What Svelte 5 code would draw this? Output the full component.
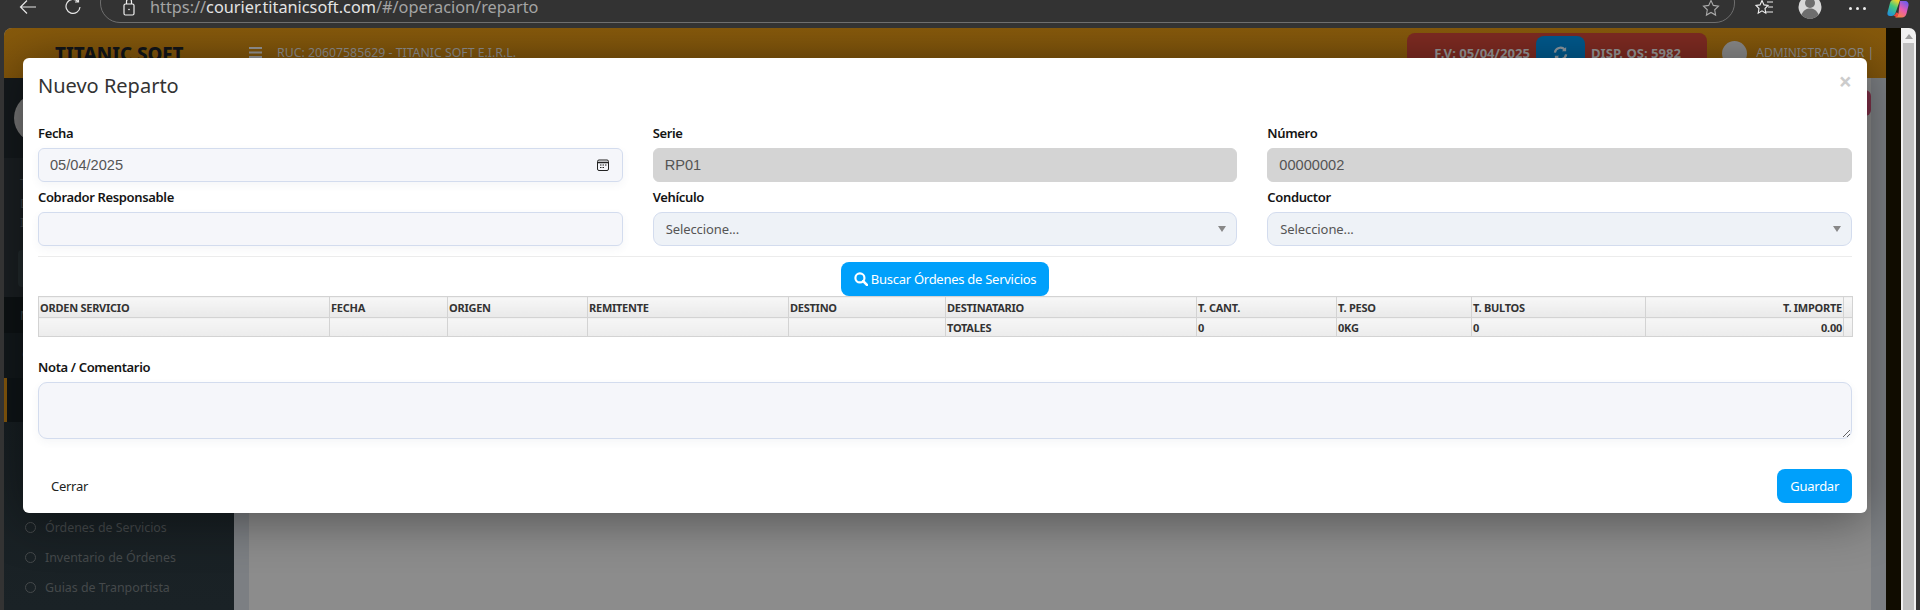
<script>
    const columns = [
        { label: "ORDEN SERVICIO", width: 291, total: "" },
        { label: "FECHA", width: 118, total: "" },
        { label: "ORIGEN", width: 140, total: "" },
        { label: "REMITENTE", width: 201, total: "" },
        { label: "DESTINO", width: 157, total: "" },
        { label: "DESTINATARIO", width: 251, total: "TOTALES" },
        { label: "T. CANT.", width: 140, total: "0" },
        { label: "T. PESO", width: 135, total: "0KG" },
        { label: "T. BULTOS", width: 174, total: "0" },
        { label: "T. IMPORTE", width: 198, total: "0.00", right: true },
        { label: "", width: 9, total: "" },
    ];

    const menu = ["Órdenes de Servicios", "Inventario de Órdenes", "Guias de Tranportista"];
</script>

<div class="browser">
    <header class="toolbar">
        <svg class="back" width="18" height="16" viewBox="0 0 18 16" fill="none" stroke="#e6e6e6" stroke-width="1.2">
            <path d="M17 8H1.5M8 1.5L1.5 8L8 14.5" />
        </svg>
        <svg class="reload" width="18" height="18" viewBox="0 0 18 18" fill="none" stroke="#e6e6e6" stroke-width="1.2">
            <path d="M14 3.5A7 7 0 1 0 16 9M14.5 0.5V4H11" />
        </svg>
        <div class="address">
            <svg class="lock" width="12" height="18" viewBox="0 0 12 18" fill="none" stroke="#f0f0f0" stroke-width="1.2">
                <rect x="1" y="6" width="10" height="11" rx="1.5" />
                <path d="M3.5 6V3.5a2.5 2.5 0 0 1 5 0V6" />
                <circle cx="6" cy="11.5" r="0.8" fill="#f0f0f0" stroke="none" />
            </svg>
            <span class="url"><span class="dim">https://</span>courier.titanicsoft.com<span class="dim">/#/operacion/reparto</span></span>
            <svg class="star" width="18" height="18" viewBox="0 0 18 18" fill="none" stroke="#aaa" stroke-width="1.1">
                <path d="M9 1.5l2.3 4.9 5.2.7-3.8 3.7.9 5.3L9 13.5l-4.6 2.6.9-5.3-3.8-3.7 5.2-.7z" />
            </svg>
        </div>
        <svg class="favs" width="20" height="18" viewBox="0 0 20 18" fill="none" stroke="#f0f0f0" stroke-width="1.1">
            <path d="M8 1.5l2 4.4 4 .6-3 3 .8 4.6L8 11.8l-3.8 2.3.8-4.6-3-3 4-.6zM13 3h6M14 8h5M12 13h7" />
        </svg>
        <div class="profile">
            <svg width="24" height="24" viewBox="0 0 24 24">
                <circle cx="12" cy="12" r="11.5" fill="#d8d8d8" />
                <circle cx="12" cy="8" r="5" fill="#6e6e6e" />
                <path d="M3.5 20c1.5-5 5-6.5 8.500-6.500s7 1.500 8.500 6.500a11.500 11.500 0 0 1-17 0z" fill="#6e6e6e" />
            </svg>
            <span class="badge"></span>
        </div>
        <div class="dots"><i></i><i></i><i></i></div>
        <svg class="copilot" width="22" height="18" viewBox="0 0 22 18">
            <defs>
                <linearGradient id="lobeLeft" x1="0.7" y1="0" x2="0.2" y2="1">
                    <stop offset="0" stop-color="#f2d32e" />
                    <stop offset="0.4" stop-color="#45c97a" />
                    <stop offset="1" stop-color="#1f8fe0" />
                </linearGradient>
                <linearGradient id="lobeRight" x1="0.8" y1="0" x2="0.2" y2="1">
                    <stop offset="0" stop-color="#6a5cf0" />
                    <stop offset="0.5" stop-color="#e85cb0" />
                    <stop offset="1" stop-color="#f78a3c" />
                </linearGradient>
            </defs>
            <path d="M6 0H13L8.500 13C8 15 6.500 16 4.500 16H3C1 16 0 14.500 0.500 12.500L3 3C3.500 1 4.500 0 6 0z" fill="url(#lobeLeft)" />
            <path d="M13 1H18C20.500 1 22 3 21.500 5.500L19.500 13.500C19 16 17 17.500 15 17.500H8C10 16.500 11 15 11.500 13z" fill="url(#lobeRight)" />
            <path d="M10 17.500L6.500 15.500C8 15 8.500 14 9 12.500L11.500 13C11 15 10.500 16.500 10 17.500z" fill="#e8483c" />
        </svg>
    </header>

    <div class="viewport">
        <div class="app">
            <div class="topbar">
                <div class="brand">TITANIC SOFT</div>
                <svg class="burger" width="13" height="11" viewBox="0 0 13 11" fill="#999">
                    <rect width="13" height="2" /><rect y="4.500" width="13" height="2" /><rect y="9" width="13" height="2" />
                </svg>
                <span class="ruc">RUC: 20607585629 - TITANIC SOFT E.I.R.L.</span>
                <div class="status">
                    <b>F.V: 05/04/2025</b>
                    <span class="sync">
                        <svg width="15" height="15" viewBox="0 0 16 16" fill="none" stroke="#8f9ba3" stroke-width="2.4">
                            <path d="M2 7a6 6 0 0 1 10.500-3M14 9a6 6 0 0 1-10.500 3" />
                            <path d="M14 1v4.500H9.500M2 15v-4.500h4.500" fill="#8f9ba3" stroke="none" />
                        </svg>
                    </span>
                    <b>DISP. OS: 5982</b>
                </div>
                <span class="avatar"></span>
                <span class="user">ADMINISTRADOOR |</span>
            </div>

            <div class="body">
                <aside class="sidebar">
                    <div class="profile-block"><span class="photo"></span></div>
                    <div class="summary">
                        <p>T</p>
                        <p>D</p>
                        <p>I</p>
                        <div class="summary-box"></div>
                    </div>
                    <div class="nav-head">M</div>
                    <div class="nav-parent">O</div>
                    <div class="nav-active">S</div>
                    <ul>
                        {#each menu as item}
                            <li><span class="ring"></span>{item}</li>
                        {/each}
                    </ul>
                </aside>
                <main class="content">
                    <div class="card">
                        <span class="red-btn"></span>
                    </div>
                </main>
            </div>

            <section class="modal">
                <div class="modal-head">
                    <h4>Nuevo Reparto</h4>
                    <span class="close">×</span>
                </div>

                <div class="form-grid">
                    <div class="field">
                        <span class="label">Fecha</span>
                        <div class="date-wrap">
                            <input class="control arial" value="05/04/2025" />
                            <svg class="calendar" width="12" height="12" viewBox="0 0 12 12" fill="none" stroke="#222" stroke-width="1">
                                <rect x="0.500" y="1" width="11" height="10.500" rx="1.500" />
                                <path d="M1 3.500h10" stroke-width="1.500" />
                                <path d="M3 6h1.500M5.500 6H7M8 6h1.500M3 8.500h1.500M5.500 8.500H7" />
                            </svg>
                        </div>
                    </div>
                    <div class="field">
                        <span class="label">Serie</span>
                        <input class="control arial locked" value="RP01" readonly />
                    </div>
                    <div class="field">
                        <span class="label">Número</span>
                        <input class="control arial locked" value="00000002" readonly />
                    </div>
                    <div class="field">
                        <span class="label">Cobrador Responsable</span>
                        <input class="control" />
                    </div>
                    <div class="field">
                        <span class="label">Vehículo</span>
                        <div class="select">Seleccione...<i class="caret"></i></div>
                    </div>
                    <div class="field">
                        <span class="label">Conductor</span>
                        <div class="select">Seleccione...<i class="caret"></i></div>
                    </div>
                </div>

                <hr />

                <div class="search-row">
                    <button class="primary search">
                        <svg width="14" height="14" viewBox="0 0 13 13" fill="none" stroke="#fff" stroke-width="2">
                            <circle cx="5.500" cy="5.500" r="4.200" />
                            <path d="M8.500 8.500L12 12" stroke-width="2.500" stroke-linecap="round" />
                        </svg>
                        Buscar Órdenes de Servicios
                    </button>
                </div>

                <table>
                    <colgroup>
                        {#each columns as col}
                            <col style="width: {col.width}px" />
                        {/each}
                    </colgroup>
                    <thead>
                        <tr>
                            {#each columns as col}
                                <th class:right={col.right}>{col.label}</th>
                            {/each}
                        </tr>
                    </thead>
                    <tbody>
                        <tr>
                            {#each columns as col}
                                <td class:right={col.right}>{col.total}</td>
                            {/each}
                        </tr>
                    </tbody>
                </table>

                <div class="note">
                    <span class="label">Nota / Comentario</span>
                    <textarea class="control"></textarea>
                </div>

                <div class="modal-foot">
                    <button class="ghost">Cerrar</button>
                    <button class="primary">Guardar</button>
                </div>
            </section>
        </div>

        <div class="black-strip"></div>
        <div class="scrollbar">
            <i class="arrow"></i>
            <div class="thumb"></div>
        </div>
    </div>
</div>

<style>
    :global(body) {
        margin: 0;
        background: #333;
        overflow: hidden;
    }
    .browser {
        width: 1920px;
        height: 610px;
        display: flex;
        flex-direction: column;
        overflow: hidden;
        font-family: "Noto Sans", sans-serif;
    }

    /* browser chrome */
    .toolbar {
        height: 28px;
        flex: none;
        display: flex;
        align-items: flex-start;
        overflow: hidden;
        background: #333;
        color: #ddd;
    }
    .back {
        margin: -1px 0 0 19px;
    }
    .reload {
        margin: -2px 0 0 27px;
    }
    .address {
        box-sizing: border-box;
        width: 1635px;
        height: 41px;
        margin: -18px 0 0 18px;
        padding: 18px 14px 0 22px;
        flex: none;
        display: flex;
        align-items: flex-start;
        border: 1px solid #6f6f6f;
        border-radius: 20px;
    }
    .lock {
        margin-top: -3px;
        flex: none;
    }
    .url {
        margin: -1px 0 0 15px;
        font-size: 16.300px;
        line-height: 15px;
        color: #e4e4e4;
        white-space: nowrap;
    }
    .dim {
        color: #a4a4a4;
    }
    .star {
        margin: -2px 0 0 auto;
    }
    .favs {
        margin: -1px 0 0 19px;
    }
    .profile {
        position: relative;
        width: 24px;
        height: 24px;
        margin: -5px 0 0 24px;
    }
    .badge {
        position: absolute;
        top: 0;
        right: 0;
        width: 5px;
        height: 5px;
        border-radius: 50%;
        background: #e87c6c;
    }
    .dots {
        display: flex;
        gap: 4px;
        margin: 7px 0 0 27px;
    }
    .dots i {
        width: 3px;
        height: 3px;
        border-radius: 50%;
        background: #eee;
    }
    .copilot {
        margin: 0 0 0 21px;
    }

    .viewport {
        flex: 1;
        min-height: 0;
        display: flex;
        padding-left: 4px;
    }
    .app {
        position: relative;
        width: 1882px;
        flex: none;
        display: flex;
        flex-direction: column;
        overflow: hidden;
        border-top-left-radius: 8px;
        background: #8c8c8c;
    }
    .black-strip {
        width: 15px;
        flex: none;
        background: #100c00;
    }
    .scrollbar {
        width: 15px;
        flex: none;
        border-top-right-radius: 7px;
        background: #f1f1f1;
        display: flex;
        flex-direction: column;
        align-items: center;
    }
    .arrow {
        margin-top: 6px;
        border: 4px solid transparent;
        border-top: 0;
        border-bottom: 5px solid #a0a0a0;
    }
    .thumb {
        width: 11px;
        flex: 1;
        margin-top: 4px;
        background: #bfbfbf;
    }

    /* dimmed page under the modal */
    .topbar {
        height: 50px;
        flex: none;
        display: flex;
        align-items: flex-start;
        background: linear-gradient(#875a0c, #7f540b);
        color: #909090;
        font-size: 12.300px;
    }
    .brand {
        margin: 16px 0 0 51px;
        width: 194px;
        font-size: 18.800px;
        line-height: 20px;
        font-weight: 800;
        color: #12151a;
        white-space: nowrap;
    }
    .burger {
        margin-top: 19px;
    }
    .ruc {
        margin: 16px 0 0 15px;
        line-height: 18px;
    }
    .status {
        width: 300px;
        height: 50px;
        flex: none;
        box-sizing: border-box;
        margin: 5px 0 0 auto;
        padding: 3px 0 0 27px;
        display: flex;
        align-items: flex-start;
        gap: 6px;
        border-radius: 8px;
        background: #7f2b22;
        font-size: 13.100px;
        white-space: nowrap;
    }
    .status b {
        margin-top: 8px;
        line-height: 18px;
        color: #999;
    }
    .sync {
        width: 49px;
        height: 40px;
        flex: none;
        padding-top: 10px;
        box-sizing: border-box;
        text-align: center;
        border-radius: 8px;
        background: #005a8e;
    }
    .avatar {
        width: 25px;
        height: 25px;
        margin: 13px 0 0 15px;
        flex: none;
        border-radius: 50%;
        background: #8b8b8b;
    }
    .user {
        margin: 16px 12px 0 9px;
        font-size: 12px;
        line-height: 18px;
        white-space: nowrap;
    }
    .body {
        flex: 1;
        min-height: 0;
        display: flex;
    }
    .sidebar {
        width: 230px;
        flex: none;
        display: flex;
        flex-direction: column;
        background: linear-gradient(#12181b, #1a2226);
        color: #3d4244;
        font-size: 13px;
    }
    .profile-block {
        height: 80px;
        flex: none;
        padding: 15px 0 0 10px;
        box-sizing: border-box;
        background: #14191c;
    }
    .photo {
        display: block;
        width: 50px;
        height: 50px;
        border-radius: 50%;
        background: #777;
    }
    .summary {
        height: 139px;
        flex: none;
        box-sizing: border-box;
        padding: 16px 0 0 16px;
        background: #1a1f22;
    }
    .summary p {
        margin: 0;
        line-height: 19.500px;
    }
    .summary-box {
        height: 37px;
        margin: 17px 0 0 -2px;
        border-radius: 4px;
        background: #222a2c;
    }
    .nav-head {
        height: 36px;
        flex: none;
        padding: 9px 0 0 16px;
        box-sizing: border-box;
        background: #0d1214;
    }
    .nav-parent {
        height: 45px;
        flex: none;
        padding: 12px 0 0 18px;
        box-sizing: border-box;
        background: #12181b;
    }
    .nav-active {
        height: 44px;
        flex: none;
        padding: 12px 0 0 18px;
        box-sizing: border-box;
        border-left: 3px solid #85570c;
        background: #0e1417;
        color: #777;
    }
    ul {
        list-style: none;
        margin: 0;
        padding: 90px 0 0 21px;
    }
    li {
        height: 30px;
        display: flex;
        align-items: center;
        gap: 9px;
        font-size: 12.400px;
        color: #45494b;
    }
    .ring {
        width: 9px;
        height: 9px;
        border: 1.500px solid #45494b;
        border-radius: 50%;
    }
    .content {
        flex: 1;
        padding: 0 15px;
        background: #7c7f83;
        display: flex;
    }
    .card {
        flex: 1;
        position: relative;
        background: #8c8c8c;
    }
    .red-btn {
        position: absolute;
        top: 12px;
        right: 0;
        width: 40px;
        height: 26px;
        border-radius: 6px;
        background: #7f3048;
    }

    /* modal */
    .modal {
        position: absolute;
        top: 30px;
        left: 19px;
        width: 1844px;
        height: 455px;
        box-sizing: border-box;
        padding: 0 15px;
        display: flex;
        flex-direction: column;
        border-radius: 6px;
        background: #fff;
        color: #141414;
        font-size: 13px;
        box-shadow: 0 5px 50px rgba(0, 0, 0, 0.45);
    }
    .modal-head {
        height: 66px;
        flex: none;
        display: flex;
        justify-content: space-between;
        align-items: flex-start;
    }
    h4 {
        margin: 14px 0 0;
        font-size: 20px;
        line-height: 28px;
        font-weight: 400;
        color: #333;
    }
    .close {
        margin: 9px 0 0 0;
        font-size: 23px;
        line-height: 28px;
        font-weight: 700;
        color: #ccc;
    }
    .form-grid {
        display: grid;
        grid-template-columns: repeat(3, 1fr);
        gap: 6px 30px;
    }
    .field {
        min-width: 0;
        display: flex;
        flex-direction: column;
    }
    .label {
        height: 18px;
        margin-bottom: 6px;
        line-height: 18px;
        font-weight: 600;
        letter-spacing: -0.35px;
    }
    .control {
        display: block;
        width: 100%;
        height: 34px;
        box-sizing: border-box;
        padding: 0 11px;
        border: 1px solid #d3dcee;
        border-radius: 6px;
        outline: none;
        background: #f5f6fa;
        box-shadow: 0 3px 8px rgba(60, 80, 120, 0.06);
        color: #555;
        font-family: "Noto Sans", sans-serif;
        font-size: 13px;
    }
    .arial {
        font-family: "Liberation Sans", sans-serif;
        font-size: 14.600px;
    }
    .locked {
        border-color: #d4d4d4;
        background: #d4d4d4;
        box-shadow: none;
    }
    .date-wrap {
        position: relative;
    }
    .calendar {
        position: absolute;
        top: 11px;
        right: 14px;
    }
    .select {
        height: 34px;
        box-sizing: border-box;
        padding: 0 12px;
        display: flex;
        align-items: center;
        justify-content: space-between;
        border: 1px solid #d3dcee;
        border-radius: 9px;
        background: #eef2f7;
        color: #555;
        letter-spacing: -0.1px;
    }
    .caret {
        margin-right: -2px;
        border: 4px solid transparent;
        border-bottom: 0;
        border-top: 6px solid #888;
    }
    hr {
        width: 100%;
        height: 1px;
        margin: 10px 0 5px;
        border: 0;
        background: #ececec;
    }
    .search-row {
        display: flex;
        justify-content: center;
    }
    button {
        height: 34px;
        box-sizing: border-box;
        border: 0;
        border-radius: 8px;
        font-family: "Noto Sans", sans-serif;
        font-size: 13px;
        letter-spacing: -0.27px;
    }
    .primary {
        padding: 0 13px;
        background: #00a0fb;
        color: #fff;
    }
    .search {
        width: 208px;
        padding: 0;
    }
    .search svg {
        vertical-align: -2px;
    }
    .ghost {
        padding: 0 13px;
        background: transparent;
        color: #222;
    }
    table {
        width: 1814px;
        flex: none;
        table-layout: fixed;
        border-collapse: collapse;
        font-size: 11px;
        letter-spacing: -0.25px;
        color: #333;
    }
    th,
    td {
        padding: 0 1px;
        overflow: hidden;
        text-align: left;
        white-space: nowrap;
        border: 1px solid #d3d3d3;
        background: linear-gradient(#f7f7f7, #e9e9e9);
        font-weight: 700;
        box-sizing: border-box;
    }
    thead th {
        height: 21px;
    }
    tbody td {
        height: 19px;
        background: linear-gradient(#f6f6f6, #ececec);
    }
    .right {
        text-align: right;
    }
    .note {
        margin-top: 21px;
        display: flex;
        flex-direction: column;
    }
    textarea {
        height: 57px !important;
        border-radius: 9px !important;
    }
    .modal-foot {
        margin-top: 30px;
        display: flex;
        justify-content: space-between;
    }
</style>
